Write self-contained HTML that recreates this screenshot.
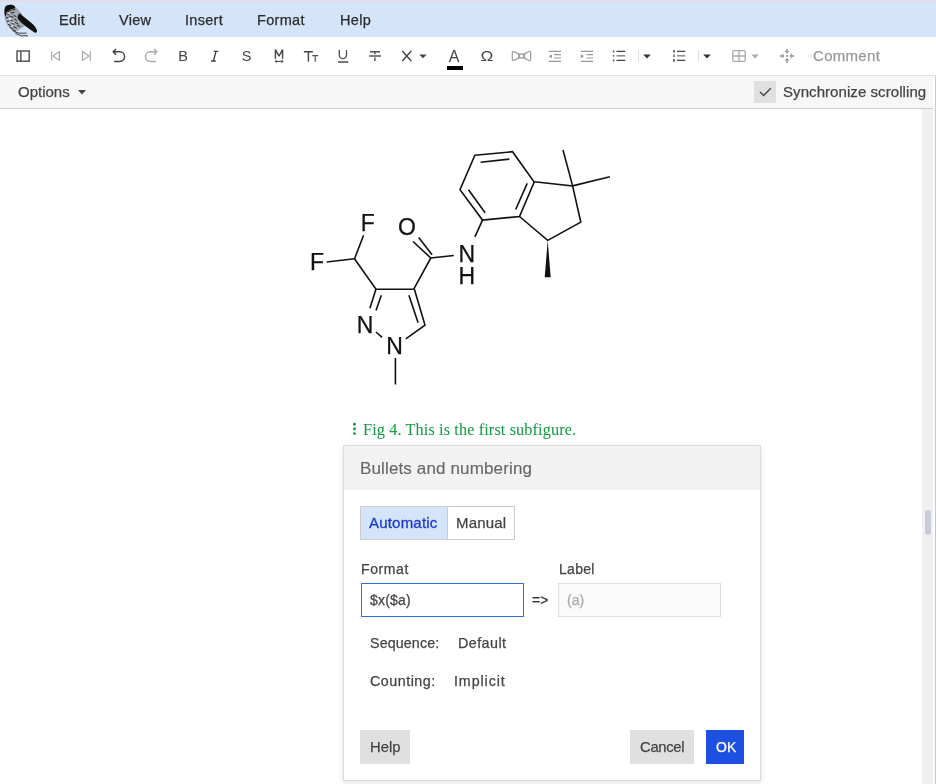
<!DOCTYPE html>
<html><head><meta charset="utf-8">
<style>
*{box-sizing:border-box}
html,body{margin:0;padding:0}
body{width:936px;height:784px;overflow:hidden;position:relative;background:#fff;font-family:"Liberation Sans",sans-serif;color:#333}
.abs{position:absolute}
.t{position:absolute;white-space:nowrap;line-height:1;will-change:transform;-webkit-text-stroke:0.25px currentColor}
#topline{left:0;top:0;width:936px;height:1px;background:#f2d4db}
#menubar{left:0;top:1px;width:936px;height:36px;background:#d4e4f9}
.mi{font-size:14.5px;color:#2b2b2b;top:13px;letter-spacing:0.3px}
#toolbar{left:0;top:37px;width:936px;height:38px;background:#fff}
#optbar{left:0;top:75px;width:933px;height:34px;background:#f7f7f7;border-bottom:1px solid #cdcdcd}
#optline{left:0;top:75px;width:936px;height:1px;background:#e0e1e6}
#track{left:922px;top:109px;width:11px;height:675px;background:#eff0f3}
#thumb{left:925px;top:510px;width:6px;height:25px;border-radius:3px;background:#c8ccd6}
#rline{left:935px;top:76px;width:1px;height:708px;background:#c8c8c8}
.ic{position:absolute;top:44px;height:24px;overflow:visible}
#dialog{left:343px;top:445px;width:418px;height:336px;border:1px solid #dcdde3;background:#fff;box-shadow:0 2px 6px rgba(0,0,0,0.11)}
#dhead{left:344px;top:446px;width:416px;height:44px;background:#f2f2f2}
.btn{position:absolute;background:#e0e0e0}
</style></head>
<body>
<div class="abs" id="menubar"></div>
<div class="abs" id="topline"></div>

<!-- logo -->
<svg class="abs" style="left:0;top:0" width="40" height="38" viewBox="0 0 40 38">
 <path d="M4.8,8 C5.5,5.2 9,4.4 12.5,5 C14.5,5.5 16.5,7.5 18.5,10 L22,14 L25,26 C21.5,28.5 18,30.5 15,31.8 C10.5,30.5 7,26 5.5,21 C4,16 4,11 4.8,8 Z" fill="#a3a9b2"/>
 <path d="M4.8,8 C5.5,5.2 9,4.4 12.5,5 C14.5,5.6 15.8,7 14.8,8.4 C11.5,9 8.5,10 6.5,12.5 L5.5,17 C4.3,14 4.3,10.5 4.8,8 Z" fill="#111"/>
 <path d="M19.5,13.2 L30.8,22.6 C33.8,25 36,27.8 37,30.5 C37.2,32.5 36,33.2 34.5,32.5 L27,27.2 C23,24.5 20,21.5 17.8,18.8 C17.3,16.8 18,14.6 19.5,13.2 Z" fill="#111"/>
 <g stroke="#1a1a1a" stroke-width="0.9" fill="none" stroke-linecap="round">
  <path d="M8,11.5 L11,10.5 M12.5,10 L15,9.5 M7,14 L9.5,15 M11,13 L14,12.5"/>
  <path d="M6,18 L8,17.5 M10,16.5 L13,17 M14,15.5 L16,16.5"/>
  <path d="M7,21.5 L9,21 M11,20 L13,21 M14.5,19 L16.5,20.5"/>
  <path d="M8.5,24.5 L10.5,25.5 M12,23.5 L14,24 M15.5,22.5 L18,24"/>
  <path d="M10.5,27.5 L12.5,28.5 M14,27 L16.5,28 M17.5,25.5 L20,26.5"/>
  <path d="M12.5,30 L15.5,31"/>
 </g>
 <g fill="#dbe8fa">
  <ellipse cx="10" cy="19" rx="1.3" ry="0.9"/>
  <ellipse cx="13" cy="22.5" rx="1.2" ry="0.8"/>
  <ellipse cx="8.5" cy="23" rx="0.9" ry="0.7"/>
  <ellipse cx="12" cy="26" rx="1" ry="0.7"/>
  <ellipse cx="9" cy="13.5" rx="1" ry="0.7"/>
 </g>
 <path d="M13.5,31.5 L19.5,33.2 L26.5,33.2 M15.5,33.5 L21.5,35.8 L28,35.8" stroke="#2a2a2a" stroke-width="0.9" fill="none"/>
</svg>

<div class="t mi" style="left:59px">Edit</div>
<div class="t mi" style="left:119px">View</div>
<div class="t mi" style="left:185px">Insert</div>
<div class="t mi" style="left:257px">Format</div>
<div class="t mi" style="left:340px">Help</div>


<!-- toolbar -->
<svg class="abs" style="left:0;top:0;will-change:transform" width="936" height="76" viewBox="0 0 936 76">
<g fill="none" stroke-width="1.5">
 <!-- panel -->
 <rect x="17" y="51" width="12.2" height="10.2" stroke="#555"/>
 <path d="M20.8,51 V61.2" stroke="#555"/>
 <!-- prev/next -->
 <path d="M51.6,51.2 V60.8 M59.3,51.6 L53,56 L59.3,60.4 Z" stroke="#aaa" stroke-width="1.2"/>
 <path d="M90.2,51.2 V60.8 M82.5,51.6 L88.8,56 L82.5,60.4 Z" stroke="#aaa" stroke-width="1.2"/>
 <!-- undo -->
 <path d="M113.6,51.8 H119.8 A4.8,4.8 0 0 1 119.8,61.4 H114" stroke="#444"/>
 <path d="M116,49 L113.2,51.8 L116,54.6" stroke="#444"/>
 <!-- redo -->
 <path d="M156.4,51.8 H150.2 A4.8,4.8 0 0 0 150.2,61.4 H156" stroke="#aaa"/>
 <path d="M154,49 L156.8,51.8 L154,54.6" stroke="#aaa"/>
 <!-- italic I -->
 <path d="M213.6,51.4 H218.4 M211,61 H215.8 M216,51.4 L213.4,61" stroke="#444" stroke-width="1.4"/>
 <!-- M underline arrow -->
 <path d="M275.4,58.8 V49.6 L279,56.2 L282.6,49.6 V58.8" stroke="#444" stroke-width="1.4" stroke-linejoin="bevel"/>
 <path d="M303.9,51.7 H312.9 M308.4,51.7 V61.8" stroke="#444" stroke-width="1.4"/>
 <path d="M312.2,55.6 H318.2 M315.2,55.6 V61.8" stroke="#555" stroke-width="1.2"/>
 <path d="M275.2,61.4 H283" stroke="#444" stroke-width="1.1"/>
 <path d="M276.6,60.1 L275,61.4 L276.6,62.7 M281.6,60.1 L283.2,61.4 L281.6,62.7" stroke="#444" stroke-width="1"/>
 <!-- U underline -->
 <path d="M338,62 H348.2" stroke="#555" stroke-width="1.6"/>
 <!-- strikethrough -->
 <path d="M370,51.8 H380 M374.9,51.8 V54.2 M369.2,55.9 H380.9 M374.9,57.6 V61" stroke="#555" stroke-width="1.5"/>
 <!-- X -->
 <path d="M402.2,51 L411.3,61 M411.3,51 L402.2,61" stroke="#444" stroke-width="1.4"/>
 <!-- Bowtie -->
 <path d="M518.6,53.9 L514.2,51.7 Q512.3,50.9 512.3,52.9 V59.1 Q512.3,61.1 514.2,60.3 L518.6,58.1 Z M524.4,53.9 L528.8,51.7 Q530.7,50.9 530.7,52.9 V59.1 Q530.7,61.1 528.8,60.3 L524.4,58.1 Z" stroke="#999" stroke-width="1.2" stroke-linejoin="round"/><rect x="519" y="54.1" width="5" height="3.8" stroke="#999" stroke-width="1.3" fill="none"/>
 <!-- outdent -->
 <path d="M548.8,51.3 H561 M554.1,54.65 H561 M554.1,58 H561 M548.8,61.3 H561" stroke="#999" stroke-width="1.2"/>
 <!-- indent -->
 <path d="M580.9,51.3 H593.1 M586.4,54.65 H593.1 M586.4,58 H593.1 M580.9,61.3 H593.1" stroke="#999" stroke-width="1.2"/>
 <!-- bullet list -->
 <path d="M616.5,51.4 H625.2 M616.5,60.4 H625.2" stroke="#444" stroke-width="1.4"/><path d="M616.5,55.8 H625.2" stroke="#888" stroke-width="1.5"/>
 <!-- dividers -->
 <path d="M638.5,50 V61.6 M698.5,50 V61.6" stroke="#dcdde6" stroke-width="1"/>
 <!-- numbered list -->
 <path d="M677,51.4 H685.2 M677,60.4 H685.2" stroke="#444" stroke-width="1.4"/><path d="M677,55.8 H685.2" stroke="#888" stroke-width="1.5"/>
 <!-- table -->
 <rect x="732.8" y="50.7" width="12.4" height="10.6" rx="1" stroke="#aaa" stroke-width="1.3"/><path d="M739,50.7 V61.3 M732.8,56 H745.2" stroke="#aaa" stroke-width="1.3"/>
 <!-- move -->
</g>
<g stroke="none">
 <path d="M548.9,56.25 L551.8,54.1 V58.4 Z" fill="#999"/>
 <path d="M583.9,56.25 L580.9,54.1 V58.4 Z" fill="#999"/>
 <rect x="612.8" y="50.6" width="1.6" height="1.6" fill="#444"/>
 <rect x="612.8" y="55" width="1.6" height="1.6" fill="#666"/>
 <rect x="612.8" y="59.6" width="1.6" height="1.6" fill="#444"/>
 <rect x="673.2" y="50" width="1.6" height="2.6" fill="#555"/>
 <rect x="673.2" y="54.5" width="1.6" height="2.6" fill="#666"/>
 <rect x="673.2" y="59" width="1.6" height="2.8" fill="#555"/>
 <path d="M419.3,54.6 H426.7 L423,58.2 Z" fill="#444"/>
 <path d="M643.2,54.4 H650.8 L647,58.6 Z" fill="#333"/>
 <path d="M703.2,54.4 H710.8 L707,58.6 Z" fill="#333"/>
 <path d="M751.4,54.4 H758.8 L755.1,58.4 Z" fill="#aaa"/>
 <rect x="447" y="66" width="16" height="4" fill="#000"/>
 <g fill="#999"><rect x="786.1" y="55.1" width="1.8" height="1.8"/><rect x="786.2" y="48.8" width="1.6" height="2.5"/><path d="M784.6,51.1 H789.4 L787,53.8 Z"/><path d="M784.6,60.7 H789.4 L787,58.1 Z"/><rect x="786.2" y="60.5" width="1.6" height="2.6"/><rect x="779.8" y="55.2" width="2.4" height="1.6"/><path d="M782.1,53.1 V58.8 L784.5,56 Z"/><path d="M791.9,53.1 V58.8 L789.5,56 Z"/><rect x="791.8" y="55.2" width="2.4" height="1.6"/></g>
</g>
<g font-family="Liberation Sans, sans-serif" fill="#444">
 <text x="178.2" y="61.3" font-size="14.5">B</text>
 <text x="241.8" y="61.3" font-size="14.5">S</text>
 <text x="448.8" y="62" font-size="16">A</text>
 <text transform="translate(480.6,61.2) scale(1.13,1)" x="0" y="0" font-size="15.2">&#937;</text>
 <text x="813" y="60.8" font-size="15" fill="#999" stroke="#999" stroke-width="0.25" letter-spacing="0.3">Comment</text>
</g>
<path d="M339.3,50 V55 A3.6,3.6 0 0 0 346.5,55 V50" fill="none" stroke="#555" stroke-width="1.4"/>
</svg>

<div class="abs" id="optbar"></div>
<div class="abs" id="optline"></div>
<div class="t" style="left:18px;top:84px;font-size:15px;color:#444">Options</div>
<svg class="abs" style="left:78px;top:90px" width="9" height="5"><path d="M0,0 H8 L4,4.5Z" fill="#444"/></svg>
<div class="abs" style="left:754px;top:81px;width:22px;height:22px;background:#e0e0e0"></div>
<svg class="abs" style="left:754px;top:81px" width="22" height="22"><path d="M6,11 L9.6,14.6 L16.8,7.3" fill="none" stroke="#444" stroke-width="1.4"/></svg>
<div class="t" style="left:783px;top:84px;font-size:15px;color:#444;letter-spacing:0.07px">Synchronize scrolling</div>

<div class="abs" id="track"></div>
<div class="abs" id="thumb"></div>
<div class="abs" id="rline"></div>


<!-- molecule -->
<svg class="abs" style="left:0;top:0" width="936" height="784" viewBox="0 0 936 784">
<g stroke="#111" stroke-width="1.6" fill="none" stroke-linecap="butt">
<path d="M474.9,155.3 L512.5,151.7 L534.2,182.1 L519.5,216.5 L482.5,220.1 L460,189.7 Z"/>
<path d="M480.6,162.3 L509.3,159.1"/>
<path d="M527.2,183.4 L515.7,209.5"/>
<path d="M468.5,189.7 L485.1,212.7"/>
<path d="M482.5,220.1 L474.9,236.9"/>
<path d="M534.3,181.7 L572.6,185.9 L580.8,222.2 L547.7,240.4 L519.5,216.5"/>
<path d="M572.6,185.9 L563,150"/>
<path d="M572.6,185.9 L609.9,176.7"/>
<path d="M453.8,255.5 L430.8,258 L413.6,289.3"/>
<path d="M430.8,258 L413,241.5"/>
<path d="M432.1,254.8 L418.7,237.6"/>
<path d="M413.6,289.3 L376,289.1 L354.5,258.8"/>
<path d="M354.5,258.8 L363.6,235.3"/>
<path d="M354.5,258.8 L326.7,262"/>
<path d="M376,289.1 L369.9,308.3"/>
<path d="M381.3,295.3 L376,310.6"/>
<path d="M376,332 L382.1,337.4"/>
<path d="M405.8,338.9 L425,325.1 L414.3,289.1"/>
<path d="M408.9,295.3 L418.1,322.8"/>
<path d="M395.4,358 L395.4,384.5"/>
</g>
<path d="M547.7,240.4 L550.7,277.3 L544.7,277.3 Z" fill="#111"/>
<g font-family="Liberation Sans, sans-serif" font-size="23" fill="#111" stroke="#111" stroke-width="0.25" text-anchor="middle">
<text x="367.9" y="231">F</text>
<text x="317" y="270">F</text>
<text x="406.9" y="234.6">O</text>
<text x="466.7" y="261.9">N</text>
<text x="466.7" y="283.5">H</text>
<text x="365.1" y="332.5">N</text>
<text x="394.6" y="353.9">N</text>
</g>
</svg>

<!-- caption -->
<svg class="abs" style="left:350px;top:420px" width="10" height="18"><g fill="#169a46"><circle cx="4.5" cy="4.3" r="1.45"/><circle cx="4.5" cy="9" r="1.45"/><circle cx="4.5" cy="13.6" r="1.45"/></g></svg>
<div class="t" id="caption" style="left:363px;top:422px;font-family:'Liberation Serif',serif;font-size:16.2px;color:#169a46;letter-spacing:0.14px;-webkit-text-stroke:0.05px #169a46">Fig 4. This is the first subfigure.</div>

<!-- dialog -->
<div class="abs" id="dialog"></div>
<div class="abs" id="dhead"></div>
<div class="t" id="d_title" style="left:360px;top:460px;font-size:17px;color:#666;letter-spacing:0.14px;-webkit-text-stroke:0.12px #666">Bullets and numbering</div>
<div class="abs" style="left:360px;top:506px;width:155px;height:34px;border:1px solid #cbcbcb;background:#fff"></div>
<div class="abs" style="left:361px;top:507px;width:86px;height:32px;background:#d4e4f9"></div>
<div class="abs" style="left:447px;top:507px;width:1px;height:32px;background:#cbcbcb"></div>
<div class="t" id="d_auto" style="left:369px;top:515px;font-size:15px;color:#1b3acb;letter-spacing:0.2px;-webkit-text-stroke:0.3px #1b3acb">Automatic</div>
<div class="t" id="d_manual" style="left:456px;top:515px;font-size:15px;color:#444;letter-spacing:0.2px">Manual</div>
<div class="t" id="d_format" style="left:361px;top:562px;font-size:14px;color:#444;letter-spacing:0.6px">Format</div>
<div class="t" id="d_label" style="left:559px;top:562px;font-size:14px;color:#444;letter-spacing:0.3px">Label</div>
<div class="abs" style="left:361px;top:583px;width:163px;height:34px;border:1px solid #2f6fe4;background:#fff"></div>
<div class="t" id="d_fmtval" style="left:370px;top:593px;font-size:14px;color:#444;letter-spacing:0.2px">$x($a)</div>
<div class="t" id="d_arrow" style="left:532px;top:593px;font-size:14px;color:#333">=&gt;</div>
<div class="abs" style="left:558px;top:583px;width:163px;height:34px;border:1px solid #dedede;background:#fafafa"></div>
<div class="t" id="d_lblval" style="left:567px;top:593px;font-size:14px;color:#aaa">(a)</div>
<div class="t" id="d_seq" style="left:370px;top:636px;font-size:14.3px;color:#444;letter-spacing:0.1px">Sequence:</div>
<div class="t" id="d_def" style="left:458px;top:636px;font-size:14.3px;color:#444;letter-spacing:0.45px">Default</div>
<div class="t" id="d_cnt" style="left:370px;top:674px;font-size:14.3px;color:#444;letter-spacing:0.5px">Counting:</div>
<div class="t" id="d_imp" style="left:454px;top:674px;font-size:14.3px;color:#444;letter-spacing:0.9px">Implicit</div>
<div class="btn" style="left:360px;top:730px;width:50px;height:34px"></div>
<div class="t" id="d_help" style="left:370px;top:740px;font-size:14.8px;color:#444">Help</div>
<div class="btn" style="left:630px;top:730px;width:64px;height:34px"></div>
<div class="t" id="d_cancel" style="left:640px;top:740px;font-size:14.8px;color:#444;letter-spacing:-0.3px">Cancel</div>
<div class="btn" style="left:706px;top:730px;width:38px;height:34px;background:#1d4fe0"></div>
<div class="t" id="d_ok" style="left:716px;top:740px;font-size:14px;color:#fff">OK</div>

</body></html>
